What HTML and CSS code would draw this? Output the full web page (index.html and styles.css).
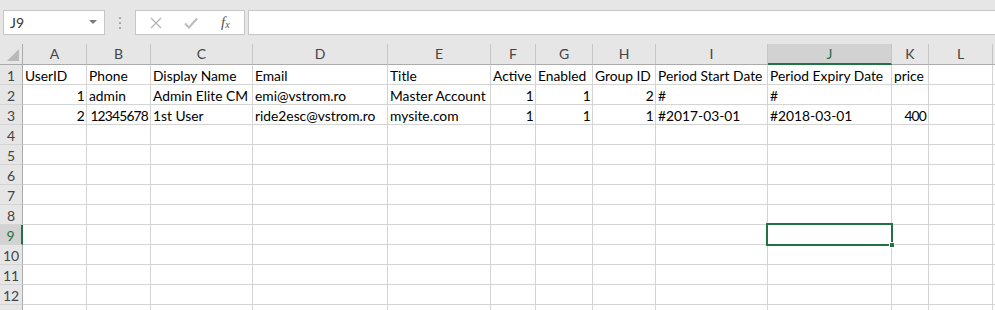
FILE: index.html
```html
<!DOCTYPE html>
<html lang="en">
<head>
    <meta charset="UTF-8">
    <title>Users.xlsx</title>
    <link rel="stylesheet" href="styles.css">
</head>
<body>
    <!-- Name box + formula bar -->
    <div class="formula-row">
        <div class="name-box">
            <span>J9</span>
            <svg class="caret" width="8" height="5" viewBox="0 0 8 5"><path d="M0 0h8L4 4z" fill="#7a7a7a"/></svg>
        </div>
        <div class="grip">
            <svg width="3" height="12" viewBox="0 0 3 12"><rect x="0" y="0" width="2" height="2" fill="#a8a8a8"/><rect x="0" y="5" width="2" height="2" fill="#a8a8a8"/><rect x="0" y="10" width="2" height="2" fill="#a8a8a8"/></svg>
        </div>
        <div class="fx-box">
            <svg class="fx-icon" width="12" height="12" viewBox="0 0 12 12"><path d="M1 1l10 10M11 1L1 11" stroke="#b4b4b4" stroke-width="1.3" fill="none"/></svg>
            <svg class="fx-icon" width="14" height="12" viewBox="0 0 14 12"><path d="M1 6.5l4 4L13 1.5" stroke="#bcbcbc" stroke-width="2" fill="none"/></svg>
            <span class="fx">f<sub>x</sub></span>
        </div>
        <div class="formula-input"></div>
    </div>

    <div class="sheet" id="sheet"></div>

    <script>
        const cols = ['A', 'B', 'C', 'D', 'E', 'F', 'G', 'H', 'I', 'J', 'K', 'L'];
        const data = [
            ['UserID', 'Phone', 'Display Name', 'Email', 'Title', 'Active', 'Enabled', 'Group ID', 'Period Start Date', 'Period Expiry Date', 'price', ''],
            [1, 'admin', 'Admin Elite CM', 'emi@vstrom.ro', 'Master Account', 1, 1, 2, '#', '#', '', ''],
            [2, 12345678, '1st User', 'ride2esc@vstrom.ro', 'mysite.com', 1, 1, 1, '#2017-03-01', '#2018-03-01', 400, '']
        ];
        const sheet = document.getElementById('sheet');

        function cell(cls, text) {
            const el = document.createElement('div');
            el.className = cls;
            el.textContent = text;
            sheet.appendChild(el);
            return el;
        }

        // column headers
        cell('corner', '');
        cols.forEach(c => cell(c === 'J' ? 'col-head active' : 'col-head', c));
        cell('col-head filler', '');

        // rows (13th only peeks in at the bottom edge)
        for (let r = 1; r <= 13; r++) {
            cell(r === 9 ? 'row-head active' : 'row-head', r < 13 ? r : '');
            const values = data[r - 1] || [];
            cols.forEach((c, i) => {
                const v = values[i] === undefined ? '' : values[i];
                const el = cell(typeof v === 'number' ? 'cell num' : 'cell', v);
                if (r === 9 && c === 'J') {
                    el.classList.add('selected');
                    el.innerHTML = '<div class="selection"><span class="handle"></span></div>';
                }
            });
            cell('cell filler', '');
        }
    </script>
</body>
</html>
```

FILE: styles.css
```css
* {
    margin: 0;
    padding: 0;
    box-sizing: border-box;
}
body {
    font-family: Lato, "Liberation Sans", sans-serif;
    font-size: 13.8px;
    background-color: #ffffff;
    color: #000000;
    width: 995px;
    height: 310px;
    overflow: hidden;
}
/* Formula bar */
.formula-row {
    height: 44px;
    background-color: #e6e6e6;
    display: flex;
    align-items: flex-start;
    padding: 10px 0 0 3px;
}
.name-box {
    width: 102px;
    height: 25px;
    background: #ffffff;
    border: 1px solid #c6c6c6;
    display: flex;
    align-items: center;
    justify-content: space-between;
    padding: 0 7px 0 6px;
    color: #333333;
    font-size: 14px;
}
.grip {
    width: 30px;
    height: 25px;
    display: flex;
    align-items: center;
    justify-content: center;
}
.fx-box {
    width: 110px;
    height: 25px;
    background: #ffffff;
    border: 1px solid #c6c6c6;
    display: flex;
    align-items: center;
    padding-left: 14px;
    gap: 22px;
}
.fx {
    font-family: "Liberation Serif", serif;
    font-style: italic;
    font-size: 15px;
    color: #555555;
    margin-left: 1px;
}
.fx sub {
    font-size: 10px;
    vertical-align: -1px;
}
.formula-input {
    flex: 1;
    height: 25px;
    margin-left: 3px;
    background: #ffffff;
    border-top: 1px solid #c6c6c6;
    border-bottom: 1px solid #c6c6c6;
    border-left: 1px solid #c6c6c6;
}
/* Grid */
.sheet {
    display: grid;
    grid-template-columns: 23px 64px 64px 102px 135px 103px 45px 57px 63px 112px 124px 37px 64px 2px;
    grid-auto-rows: 20px;
    grid-template-rows: 21px;
}
.corner,
.col-head,
.row-head {
    background-color: #e6e6e6;
    color: #444444;
    text-align: center;
    border-right: 1px solid #c6c6c6;
    border-bottom: 1px solid #ababab;
    font-size: 14px;
}
.corner {
    position: relative;
    border-right: 1px solid #ababab;
}
.corner::after {
    content: '';
    position: absolute;
    right: 3px;
    bottom: 3px;
    border-left: 12px solid transparent;
    border-bottom: 12px solid #b9b9b9;
}
.col-head {
    line-height: 20px;
}
.col-head.active {
    background-color: #d2d2d2;
    border-bottom: 2px solid #217346;
    color: #217346;
}
.row-head {
    border-right: 1px solid #ababab;
    border-bottom: 1px solid #d4d4d4;
    padding-top: 1px;
    line-height: 19px;
}
.row-head.active {
    background-color: #d2d2d2;
    border-right: 2px solid #217346;
    color: #217346;
}
.filler {
    border-right: none;
}
.cell {
    position: relative;
    border-right: 1px solid #d4d4d4;
    border-bottom: 1px solid #d4d4d4;
    padding: 1px 2px 0 2px;
    line-height: 19px;
    white-space: nowrap;
}
/* Lato digits run wider than the sheet font */
.cell.num {
    text-align: right;
    letter-spacing: -0.8px;
}
.cell.selected {
    z-index: 2;
}
.selection {
    position: absolute;
    left: -2px;
    top: -2px;
    right: -2px;
    bottom: -2px;
    border: 2px solid #217346;
}
.handle {
    position: absolute;
    right: -4px;
    bottom: -4px;
    width: 6px;
    height: 6px;
    background: #217346;
    border: 1px solid #ffffff;
}
```
